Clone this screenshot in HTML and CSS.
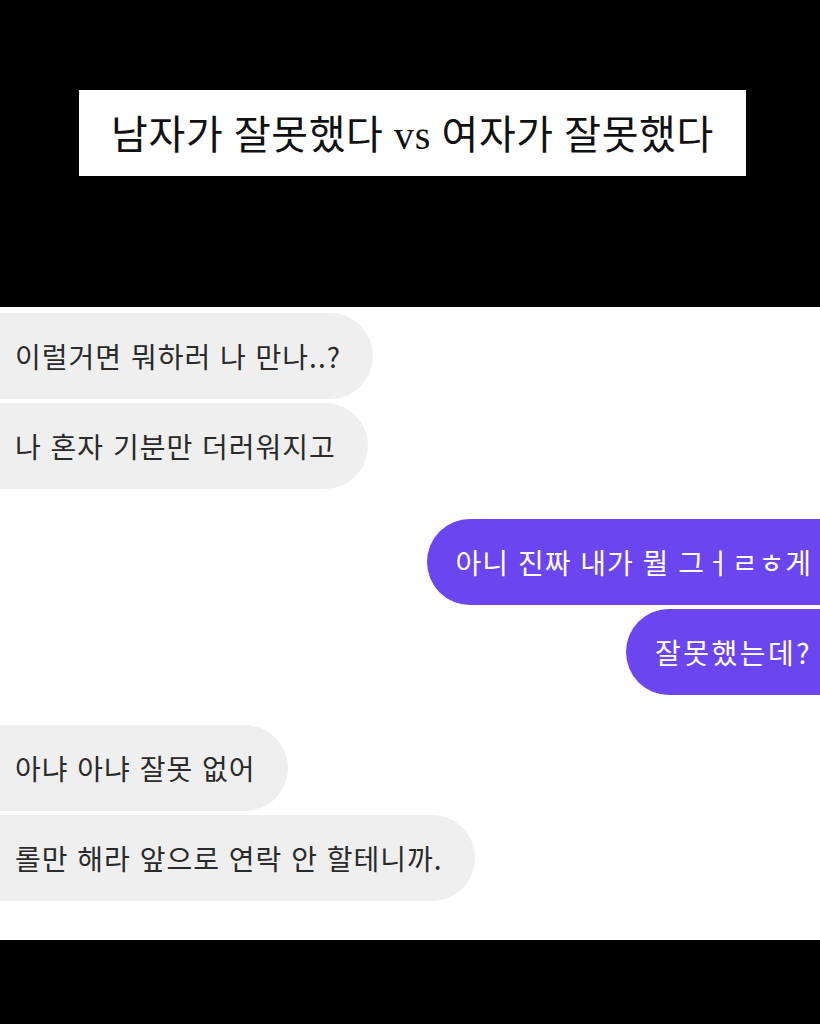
FILE: index.html
```html
<!DOCTYPE html>
<html lang="ko">
<head>
<meta charset="utf-8">
<link rel="stylesheet" href="styles.css">
</head>
<body>
<header class="top">
  <h1 class="title">남자가 잘못했다 vs 여자가 잘못했다</h1>
</header>
<main class="chat">
  <div class="group">
    <div class="bubble them">이럴거면 뭐하러 나 만나..?</div>
    <div class="bubble them">나 혼자 기분만 더러워지고</div>
  </div>
  <div class="group me-group">
    <div class="bubble me">아니 진짜 내가 뭘 그ㅓㄹㅎ게</div>
    <div class="bubble me wide">잘못했는데?</div>
  </div>
  <div class="group">
    <div class="bubble them">아냐 아냐 잘못 없어</div>
    <div class="bubble them">롤만 해라 앞으로 연락 안 할테니까.</div>
  </div>
</main>
<footer class="bottom"></footer>
</body>
</html>
```
FILE: styles.css
```css
html, body {
  margin: 0;
  padding: 0;
  background: #000;
}
body {
  width: 820px;
  height: 1024px;
  overflow: hidden;
}
.top {
  height: 307px;
  box-sizing: border-box;
  padding: 90px 74px 0 79px;
}
.title {
  margin: 0;
  height: 86px;
  background: #fff;
  display: flex;
  align-items: center;
  justify-content: center;
  font-family: "Liberation Serif", "Noto Sans CJK KR", serif;
  font-weight: 400;
  font-size: 40px;
  letter-spacing: 0.6px;
  color: #111;
  padding-bottom: 2px;
  box-sizing: border-box;
}
.chat {
  height: 633px;
  background: #fff;
  overflow: hidden;
  box-sizing: border-box;
  padding-top: 6px;
  display: flex;
  flex-direction: column;
  gap: 30px;
}
.group {
  display: flex;
  flex-direction: column;
  align-items: flex-start;
  gap: 4px;
}
.me-group {
  align-items: flex-end;
}
.bubble {
  height: 86px;
  border-radius: 43px;
  display: flex;
  align-items: center;
  box-sizing: border-box;
  font-family: "Noto Sans CJK KR", sans-serif;
  font-size: 28px;
  letter-spacing: 1px;
  white-space: nowrap;
}
.them {
  background: #efefef;
  color: #2a2a2a;
  margin-left: -43px;
  padding: 0 32px 0 58px;
}
.me {
  background: #6b45ee;
  color: #fff;
  margin-right: -43px;
  padding: 0 51px 0 29px;
}
.me.wide {
  letter-spacing: 2.5px;
}
.bottom {
  height: 84px;
  background: #000;
}
```
